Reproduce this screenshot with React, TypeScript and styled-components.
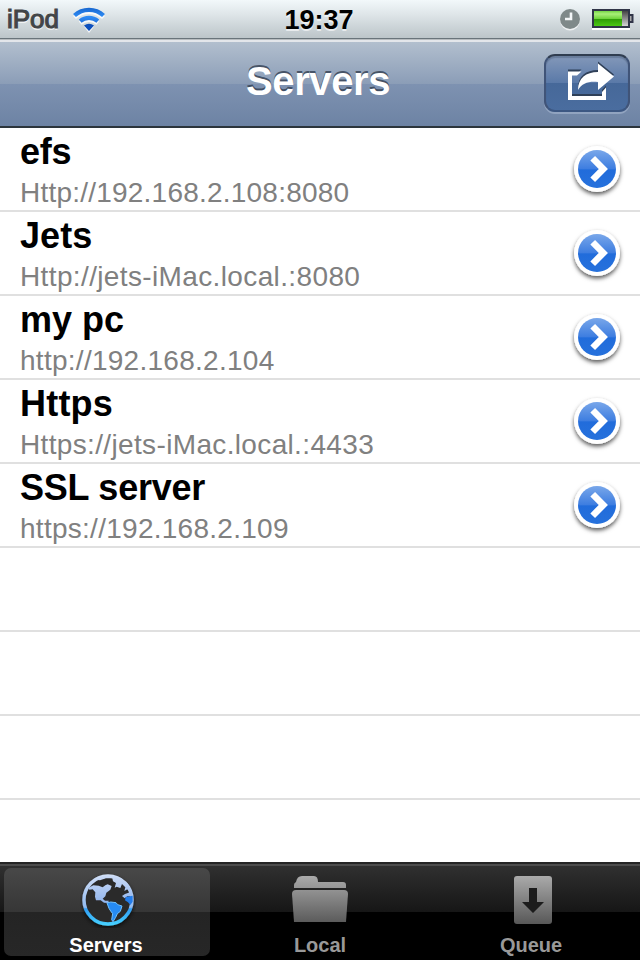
import React from "react";
import styled, { createGlobalStyle } from "styled-components";

const GlobalStyle = createGlobalStyle`
  * { box-sizing: border-box; }
  body { margin: 0; background: #000; font-family: "Liberation Sans", Arial, sans-serif; }
`;

const Screen = styled.div`
  width: 640px;
  height: 960px;
  display: flex;
  flex-direction: column;
  overflow: hidden;
  background: #fff;
`;

const StatusBar = styled.header`
  height: 40px;
  flex: none;
  display: grid;
  grid-template-columns: 1fr auto 1fr;
  align-items: start;
  padding: 0 6px 0 7px;
  background: linear-gradient(#f2f8fa 0, #dfe6e9 14px, #bcc5c9 38px, #69747a 38px, #69747a 39px, #b7bcbf 39px);
`;

const Carrier = styled.div`
  display: flex;
  gap: 14px;
  height: 38px;
  line-height: 38px;
  font-size: 26px;
  color: #424547;
  -webkit-text-stroke: 1.1px #424547;
  text-shadow: 0 2px 0 rgba(255, 255, 255, 0.7);
`;

const Clock = styled.div`
  line-height: 40px;
  font-size: 27px;
  font-weight: bold;
  color: #000;
  padding-right: 3px;
  text-shadow: 0 2px 0 rgba(255, 255, 255, 0.6);
`;

const Indicators = styled.div`
  display: flex;
  justify-content: flex-end;
  gap: 11px;
  padding-top: 8px;
`;

const NavBar = styled.nav`
  height: 88px;
  flex: none;
  display: grid;
  grid-template-columns: 96px 1fr 96px;
  align-items: start;
  background: linear-gradient(#e3e6ea 0, #e3e6ea 2px, #b2bfce 2px, #8b9db7 44px, #7e92b1 44px, #6d83a4 86px, #2c353c 86px);
`;

const NavTitle = styled.h1`
  grid-column: 2;
  margin: 0;
  text-align: center;
  font-size: 40px;
  line-height: 83px;
  letter-spacing: -0.4px;
  color: #fff;
  text-shadow: 0 -2px 0 rgba(45, 57, 75, 0.75);
  padding-right: 4px;
`;

const ShareButton = styled.button`
  width: 86px;
  height: 58px;
  margin: 14px 0 0;
  padding: 0 0 0 8px;
  border: 2px solid;
  border-color: #303d50 #405478 #3c5782;
  border-radius: 11px;
  display: flex;
  justify-content: center;
  align-items: center;
  background: linear-gradient(#8398b9 0, #5a79a8 27px, #466899 27px, #4a6d9f 54px);
  box-shadow: 0 2px 0 rgba(176, 192, 216, 0.5), inset 0 2px 1px rgba(45, 62, 90, 0.3);
`;

const List = styled.main`
  flex: 1;
  min-height: 0;
  overflow: hidden;
`;

const Row = styled.div`
  height: 84px;
  border-bottom: 2px solid #e0e0e0;
  display: flex;
  justify-content: space-between;
  padding: 0 12px 0 20px;
`;

const RowTitle = styled.div<{ $tracking: number }>`
  font-size: 36px;
  line-height: 40px;
  padding-top: 4px;
  font-weight: bold;
  color: #000;
  white-space: nowrap;
  letter-spacing: ${(p) => p.$tracking}px;
`;

const RowAddress = styled.div<{ $tracking: number }>`
  font-size: 28px;
  line-height: 32px;
  padding-top: 5px;
  color: #808080;
  white-space: nowrap;
  letter-spacing: ${(p) => p.$tracking}px;
`;

const Disclosure = styled.svg`
  width: 58px;
  height: 64px;
  flex: none;
  margin: 12px 0 0;
`;

const TabBar = styled.footer`
  height: 98px;
  flex: none;
  display: grid;
  grid-template-columns: repeat(3, 206px);
  column-gap: 7px;
  padding: 6px 4px 4px;
  background: linear-gradient(#252525 0, #252525 1.5px, #4c4c4c 1.5px, #4c4c4c 3.5px, #303030 3.5px, #161616 50px, #000 50px);
`;

const Tab = styled.div<{ $active?: boolean }>`
  height: 88px;
  display: flex;
  flex-direction: column;
  align-items: center;
  border-radius: 7px;
  color: ${(p) => (p.$active ? "#fff" : "#999")};
  background: ${(p) => (p.$active ? "linear-gradient(#484848 0, #363636 44px, #242424 44px, #272727 88px)" : "none")};
  svg { flex: none; margin: 4px 0 0 ${(p) => (p.$active ? 2 : 0)}px; }
`;

const TabLabel = styled.span<{ $nudge?: number }>`
  font-size: 20px;
  font-weight: bold;
  line-height: 24px;
  margin-top: 5px;
  padding-right: ${(p) => p.$nudge ?? 0}px;
`;

const WifiIcon = () => (
  <svg width="34" height="36" viewBox="0 0 34 36">
    <defs>
      <linearGradient id="wifi" x1="0" y1="7" x2="0" y2="31" gradientUnits="userSpaceOnUse">
        <stop offset="0" stopColor="#1563cb" />
        <stop offset=".4" stopColor="#2f8cf5" />
        <stop offset="1" stopColor="#0d50bd" />
      </linearGradient>
      <g id="waves">
        <path d="M1.5 15.6A21 21 0 0 1 30.5 15.6" />
        <path d="M7.2 21.2A13.5 13.5 0 0 1 24.8 21.2" />
      </g>
    </defs>
    <g fill="none" stroke="#fff" strokeOpacity=".8" strokeWidth="4.2" transform="translate(0 2)">
      <use href="#waves" />
    </g>
    <path d="M11 26.5Q16 23 21 26.5L16 33Z" fill="#fff" opacity=".8" />
    <g fill="none" stroke="url(#wifi)" strokeWidth="4.2">
      <use href="#waves" />
    </g>
    <path d="M11 25.5Q16 22 21 25.5L16 31Z" fill="#0d50bd" />
  </svg>
);

const AlarmIcon = () => (
  <svg width="22" height="24" viewBox="0 0 22 24">
    <circle cx="11" cy="12.5" r="10" fill="#fff" opacity=".7" />
    <circle cx="11" cy="11" r="10" fill="#7f8989" />
    <path d="M12 4.5V11H6" fill="none" stroke="#f3f6f7" strokeWidth="2.6" />
  </svg>
);

const BatteryIcon = () => (
  <svg width="42" height="22" viewBox="0 0 42 22">
    <defs>
      <linearGradient id="charge" x1="0" y1="0" x2="0" y2="1">
        <stop offset="0" stopColor="#74d644" />
        <stop offset=".2" stopColor="#a8ef78" />
        <stop offset=".5" stopColor="#72d53e" />
        <stop offset=".55" stopColor="#2f9c06" />
        <stop offset="1" stopColor="#4cc814" />
      </linearGradient>
      <linearGradient id="spent" x1="0" y1="0" x2="0" y2="1">
        <stop offset="0" stopColor="#444" />
        <stop offset="1" stopColor="#d5d5d5" />
      </linearGradient>
    </defs>
    <path d="M0 21H38" stroke="#fff" strokeWidth="2" />
    <rect x="1" y="2" width="36" height="17" fill="#e5efdf" stroke="#303548" strokeWidth="2" />
    <rect x="2" y="3" width="28" height="15" fill="url(#charge)" />
    <rect x="30" y="3" width="6" height="15" fill="url(#spent)" />
    <path d="M38 7H40.5V14H38" fill="#aaa" stroke="#303548" strokeWidth="2" />
  </svg>
);

const arrowPath = "M12 29C12 17 20 11 32 11V2.5L48 15.5L32 29V21C23 20 16 22 12 29Z";
const trayPath = "M15.5 10.5H2V39H40V26.5L36 31V35H6V14.5H11Z";

const ShareIcon = () => (
  <svg width="50" height="44" viewBox="0 0 50 44">
    <g fill="#2f4058" transform="translate(0 -2)">
      <path d={trayPath} />
      <path d={arrowPath} />
    </g>
    <path d={trayPath} fill="#fff" />
    <path d={arrowPath} fill="#fff" />
  </svg>
);

const DisclosureIcon = () => (
  <Disclosure viewBox="0 0 58 64">
    <defs>
      <linearGradient id="disc" x1="0" y1="0" x2="0" y2="1">
        <stop offset="0" stopColor="#79a7ea" />
        <stop offset=".5" stopColor="#3d7de0" />
        <stop offset=".52" stopColor="#216cdb" />
        <stop offset="1" stopColor="#2671dc" />
      </linearGradient>
      <filter id="lift" x="-30%" y="-30%" width="160%" height="170%">
        <feDropShadow dx="0" dy="2.5" stdDeviation="2" floodColor="#000" floodOpacity=".65" />
      </filter>
    </defs>
    <circle cx="27" cy="29" r="23" fill="#fff" filter="url(#lift)" />
    <circle cx="27" cy="29" r="19" fill="url(#disc)" />
    <path d="M22.7 18.3L33.3 29L22.7 39.7" fill="none" stroke="#fff" strokeWidth="6.6" />
  </Disclosure>
);

const GlobeIcon = () => (
  <svg width="56" height="56" viewBox="0 0 56 56">
    <defs>
      <linearGradient id="ring" x1="0" y1="2" x2="0" y2="54" gradientUnits="userSpaceOnUse">
        <stop offset="0" stopColor="#d3e0f7" />
        <stop offset=".64" stopColor="#91baf0" />
        <stop offset=".67" stopColor="#319df5" />
        <stop offset="1" stopColor="#48d4ff" />
      </linearGradient>
      <linearGradient id="land" x1="0" y1="60" x2="0" y2="145" gradientUnits="userSpaceOnUse">
        <stop offset="0" stopColor="#ccdbf6" />
        <stop offset="1" stopColor="#8fb4ed" />
      </linearGradient>
      <filter id="tabShadow" x="-20%" y="-20%" width="140%" height="150%">
        <feDropShadow dx="0" dy="2" stdDeviation="2" floodColor="#000" floodOpacity=".7" />
      </filter>
    </defs>
    <g filter="url(#tabShadow)">
      <circle cx="28" cy="28" r="24" fill="#2b2b2b" stroke="url(#ring)" strokeWidth="3.4" />
      <g transform="scale(.33333) translate(-240 -51)">
        <path fill="url(#land)" d="M266 98L280 91L296 92L308 97L316 91L323 88L335 93L331 104L319 113L316 124L308 131L315 137L326 137L325 144L312 143L302 136L288 136L285 125L286 112L278 103L268 104Z" />
        <path fill="url(#land)" d="M288 74L314 62L341 62L365 71L384 86L395 108L397 124L382 124L374 130L366 123L375 117L390 112L382 103L373 108L376 97L366 87L361 99L350 95L344 98L348 84L339 79L337 70L318 70L300 76Z" />
        <path fill="#237bea" d="M377 126L398 122L398 140L391 150L384 142L375 136Z" />
        <path fill="#258bf4" stroke="#70c2ff" strokeWidth="3" d="M321 144L332 141L348 143L353 149L366 153L361 169L352 176L347 187L339 200L335 194L338 176L332 168L327 160Z" />
      </g>
    </g>
  </svg>
);

const GreyGradient = () => (
  <defs>
    <linearGradient id="grey" x1="0" y1="4" x2="0" y2="52" gradientUnits="userSpaceOnUse">
      <stop offset="0" stopColor="#aaa" />
      <stop offset="1" stopColor="#585858" />
    </linearGradient>
  </defs>
);

const FolderIcon = () => (
  <svg width="60" height="56" viewBox="0 0 60 56">
    <GreyGradient />
    <g fill="url(#grey)">
      <path d="M4 16V13Q4 11 6 10Q7 4 12 4H24Q28 4 28 10H53Q56 10 56 13V16Z" />
      <path d="M6 18H54Q58 18 58 22L56 50H4L2 22Q2 18 6 18Z" />
    </g>
  </svg>
);

const QueueIcon = () => (
  <svg width="42" height="56" viewBox="0 0 42 56">
    <GreyGradient />
    <rect x="2" y="4" width="38" height="48" rx="3" fill="url(#grey)" />
    <path d="M17 16H25V30H32L21 41L10 30H17Z" fill="#1c1c1c" />
  </svg>
);

const servers = [
  { name: "efs", nameTracking: -0.2, address: "Http://192.168.2.108:8080", tracking: 0.22 },
  { name: "Jets", nameTracking: 0.1, address: "Http://jets-iMac.local.:8080", tracking: 0.37 },
  { name: "my pc", nameTracking: 0, address: "http://192.168.2.104", tracking: 0.27 },
  { name: "Https", nameTracking: 0.2, address: "Https://jets-iMac.local.:4433", tracking: 0.35 },
  { name: "SSL server", nameTracking: -0.25, address: "https://192.168.2.109", tracking: 0.27 },
];

export default function App() {
  return (
    <Screen>
      <GlobalStyle />
      <StatusBar>
        <Carrier>iPod<WifiIcon /></Carrier>
        <Clock>19:37</Clock>
        <Indicators><AlarmIcon /><BatteryIcon /></Indicators>
      </StatusBar>
      <NavBar>
        <NavTitle>Servers</NavTitle>
        <ShareButton aria-label="Share"><ShareIcon /></ShareButton>
      </NavBar>
      <List>
        {servers.map((s) => (
          <Row key={s.name}>
            <div>
              <RowTitle $tracking={s.nameTracking}>{s.name}</RowTitle>
              <RowAddress $tracking={s.tracking}>{s.address}</RowAddress>
            </div>
            <DisclosureIcon />
          </Row>
        ))}
        <Row />
        <Row />
        <Row />
      </List>
      <TabBar>
        <Tab $active><GlobeIcon /><TabLabel $nudge={2}>Servers</TabLabel></Tab>
        <Tab><FolderIcon /><TabLabel>Local</TabLabel></Tab>
        <Tab><QueueIcon /><TabLabel $nudge={4}>Queue</TabLabel></Tab>
      </TabBar>
    </Screen>
  );
}
